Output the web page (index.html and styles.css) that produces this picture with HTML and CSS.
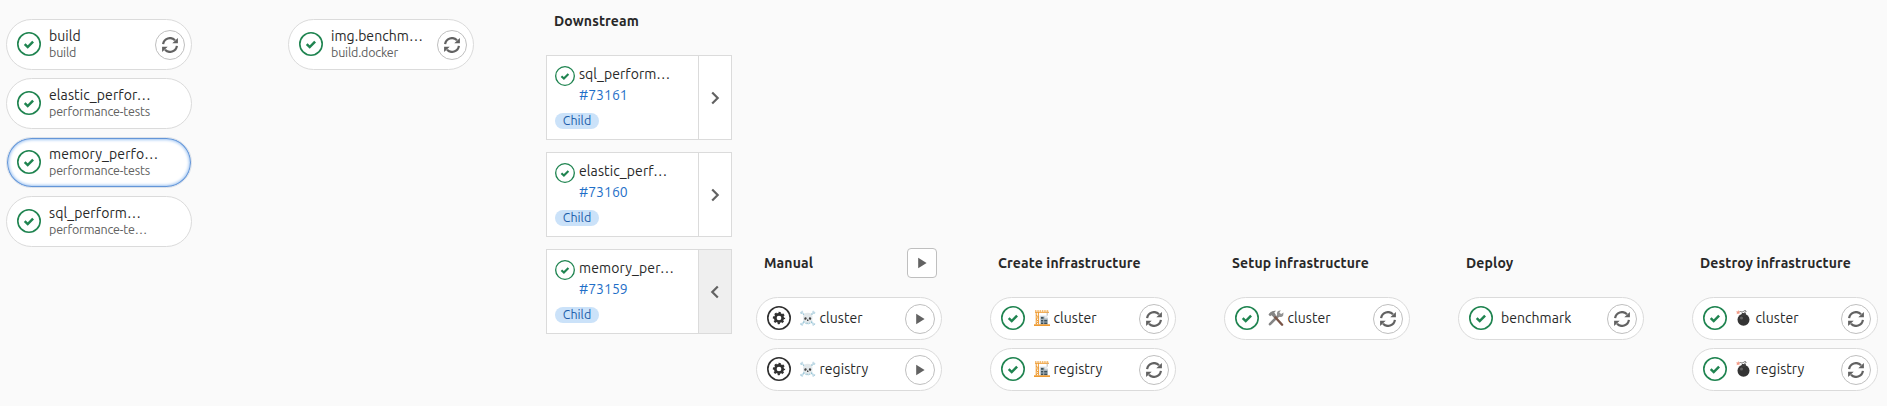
FILE: index.html
```
<!DOCTYPE html>
<html lang="en">
<head>
<meta charset="utf-8">
<title>Pipeline graph</title>
<link rel="stylesheet" href="styles.css">
</head>
<body>
<svg class="sprite" aria-hidden="true">
  <symbol id="success" viewBox="0 0 24 24"><circle cx="12" cy="12" r="11.2" fill="none" stroke="currentColor" stroke-width="1.6"/><path d="M7.7 12.2l3 2.9 5.4-5.5" fill="none" stroke="currentColor" stroke-width="2.5"/></symbol>
  <symbol id="manual" viewBox="0 0 24 24"><circle cx="12" cy="12" r="11.2" fill="none" stroke="currentColor" stroke-width="1.6"/><circle cx="12" cy="12" r="3.7" fill="none" stroke="currentColor" stroke-width="2.7"/><circle cx="12" cy="12" r="5.2" fill="none" stroke="currentColor" stroke-width="1.9" stroke-dasharray="2.2 1.884" stroke-dashoffset="1.1"/></symbol>
  <symbol id="retry" viewBox="0 0 16 16"><path d="M1.100 7.200A7 7 0 0 1 13 3.200M14.900 8.800A7 7 0 0 1 3 12.800" fill="none" stroke="currentColor" stroke-width="2.200"/><path d="M15.900 1v5.300H10.300zM.1 15V9.700H5.700z" fill="currentColor"/></symbol>
  <symbol id="play" viewBox="0 0 16 16"><path d="M4.200 2.700v10.600L12.600 8z" fill="currentColor"/></symbol>
  <symbol id="chevron" viewBox="0 0 16 16"><path d="M5.200 2.500L10.700 8l-5.500 5.500" fill="none" stroke="currentColor" stroke-width="2.200"/></symbol>
  <symbol id="crane" viewBox="0 0 16 16"><path d="M5.500 5.500h7l1.500 2v7h-8.500z" fill="#e3e7ea"/><path d="M6.500 6.500h4v2h3.200v6H6.500z" fill="#a3b0b8"/><path d="M7 7h2.500v1.800H7zM7 10h2.200v1.600H7zM10.200 10h3v1.600h-3zM7 12.500h2.200v1.600H7zM10.200 12.500h3v1.600h-3z" fill="#3c505a"/><path d="M1 2.300h14M2.200 2v12.500M4.400 2v12.500M2 5l2.500 2L2 9.300l2.500 2L2 14" fill="none" stroke="#ee9a30" stroke-width="1"/><path d="M1 1h14" stroke="#f2aa4c" stroke-width="1.300" stroke-dasharray="1.500 .8"/><path d="M13.200 2.500v3.200" stroke="#999" stroke-width=".7"/><path d="M0 14.300h16V16H0z" fill="#ee9a30"/></symbol>
  <symbol id="tools" viewBox="0 0 16 16"><path d="M2 14.200L11 5" stroke="#858585" stroke-width="2.600" stroke-linecap="round"/><path d="M10 1c-1.500 1.500-1.500 4 0 5.300s4 1 5.200-.8l.3-3-2.300 1.600-1.800-1.300L12.800.3z" fill="#929292"/><path d="M6.300 6.300l7.800 8.400" stroke="#795548" stroke-width="2.400" stroke-linecap="round"/><path d="M.5 4.800C2 2 4.500.4 8 .8L6.300 2.600l1.800 2.600-2.300 2.200-2.300-2.200-1.400 1z" fill="#858585"/></symbol>
  <symbol id="bomb" viewBox="0 0 16 16"><circle cx="7.500" cy="9.800" r="6" fill="#343434"/><path d="M5.800 3h4v3h-4z" fill="#3c3c3c"/><path d="M3.500 1.800C5 .8 5.500 3 7.500 1.400S10 .8 10 1.500 8 2.500 8 3.500" fill="none" stroke="#666" stroke-width="1"/><path d="M2.300 0l.5 1.400L4.500 1.600 3.200 2.700l.4 1.800-1.500-1-1.500.7.4-1.500L0 1.500l1.600-.1z" fill="#f39a86"/><circle cx="5.500" cy="8" r="1.500" fill="#777" opacity=".7"/></symbol>
</svg>
<main class="graph">
  <section class="stage first">
    <div class="job tall"><svg class="status"><use href="#success"/></svg><div class="label"><span class="name">build</span><span class="sub">build</span></div><button class="action" aria-label="Retry"><svg><use href="#retry"/></svg></button></div>
    <div class="job tall"><svg class="status"><use href="#success"/></svg><div class="label"><span class="name cut">elastic_perfor…</span><span class="sub">performance-tests</span></div></div>
    <div class="job tall selected"><svg class="status"><use href="#success"/></svg><div class="label"><span class="name cut">memory_perfo…</span><span class="sub">performance-tests</span></div></div>
    <div class="job tall"><svg class="status"><use href="#success"/></svg><div class="label"><span class="name cut">sql_perform…</span><span class="sub">performance-te…</span></div></div>
  </section>
  <section class="stage second">
    <div class="job tall"><svg class="status"><use href="#success"/></svg><div class="label"><span class="name">img.benchm…</span><span class="sub">build.docker</span></div><button class="action" aria-label="Retry"><svg><use href="#retry"/></svg></button></div>
  </section>
  <section class="downstream">
    <h2 class="title">Downstream</h2>
    <div class="cards">
      <article class="card"><div class="info"><svg class="status"><use href="#success"/></svg><div class="label"><span class="name">sql_perform…</span><a class="link">#73161</a></div><span class="badge">Child</span></div><button class="expand" aria-label="Expand"><svg><use href="#chevron"/></svg></button></article>
      <article class="card"><div class="info"><svg class="status"><use href="#success"/></svg><div class="label"><span class="name cut">elastic_perf…</span><a class="link">#73160</a></div><span class="badge">Child</span></div><button class="expand" aria-label="Expand"><svg><use href="#chevron"/></svg></button></article>
      <article class="card open"><div class="info"><svg class="status"><use href="#success"/></svg><div class="label"><span class="name cut">memory_per…</span><a class="link">#73159</a></div><span class="badge">Child</span></div><button class="expand" aria-label="Collapse"><svg><use href="#chevron"/></svg></button></article>
    </div>
  </section>
  <div class="child">
    <section class="stage">
      <header class="head"><h2 class="title">Manual</h2><button class="action square" aria-label="Play all"><svg><use href="#play"/></svg></button></header>
      <div class="job"><svg class="status dark"><use href="#manual"/></svg><div class="label"><span class="name"><span class="emoji">☠️</span>cluster</span></div><button class="action" aria-label="Play"><svg><use href="#play"/></svg></button></div>
      <div class="job"><svg class="status dark"><use href="#manual"/></svg><div class="label"><span class="name"><span class="emoji">☠️</span>registry</span></div><button class="action" aria-label="Play"><svg><use href="#play"/></svg></button></div>
    </section>
    <section class="stage">
      <header class="head"><h2 class="title">Create infrastructure</h2></header>
      <div class="job"><svg class="status"><use href="#success"/></svg><div class="label"><span class="name"><svg class="pic"><use href="#crane"/></svg>cluster</span></div><button class="action" aria-label="Retry"><svg><use href="#retry"/></svg></button></div>
      <div class="job"><svg class="status"><use href="#success"/></svg><div class="label"><span class="name"><svg class="pic"><use href="#crane"/></svg>registry</span></div><button class="action" aria-label="Retry"><svg><use href="#retry"/></svg></button></div>
    </section>
    <section class="stage">
      <header class="head"><h2 class="title">Setup infrastructure</h2></header>
      <div class="job"><svg class="status"><use href="#success"/></svg><div class="label"><span class="name"><svg class="pic"><use href="#tools"/></svg>cluster</span></div><button class="action" aria-label="Retry"><svg><use href="#retry"/></svg></button></div>
    </section>
    <section class="stage">
      <header class="head"><h2 class="title">Deploy</h2></header>
      <div class="job"><svg class="status"><use href="#success"/></svg><div class="label"><span class="name">benchmark</span></div><button class="action" aria-label="Retry"><svg><use href="#retry"/></svg></button></div>
    </section>
    <section class="stage">
      <header class="head"><h2 class="title">Destroy infrastructure</h2></header>
      <div class="job"><svg class="status"><use href="#success"/></svg><div class="label"><span class="name"><svg class="pic"><use href="#bomb"/></svg>cluster</span></div><button class="action" aria-label="Retry"><svg><use href="#retry"/></svg></button></div>
      <div class="job"><svg class="status"><use href="#success"/></svg><div class="label"><span class="name"><svg class="pic"><use href="#bomb"/></svg>registry</span></div><button class="action" aria-label="Retry"><svg><use href="#retry"/></svg></button></div>
    </section>
  </div>
</main>
</body>
</html>
```
FILE: styles.css
```
* { box-sizing: border-box; }
body { margin: 0; background: #fafafa; color: #282828; font-family: Ubuntu, "Noto Sans", sans-serif; font-size: 14px; line-height: 17px; overflow: hidden; }
.sprite { display: none; }
.graph { display: flex; align-items: flex-start; height: 406px; padding-left: 6px; }
.stage { display: flex; flex-direction: column; gap: 8px; width: 186px; flex: none; }
.first, .second { padding-top: 19px; }
.first { margin-right: 96px; }
.second { margin-right: 72px; }
.job { display: flex; align-items: center; height: 43px; padding: 0 6px 0 10px; border: 1px solid #dbdbdb; border-radius: 26px; background: #fff; }
.job.tall { height: 51px; }
.job.selected { border-color: #dce2ea; box-shadow: inset 0 0 0 1px #6496d8, inset 0 0 3px 2px #a0c5f2; }
.status { width: 24px; height: 24px; flex: none; margin-top: -1px; color: #1f8450; }
.status.dark { color: #303030; }
.label { display: flex; flex-direction: column; flex: 1; margin-left: 8px; white-space: nowrap; }
.job .label { margin-top: -1px; }
.job.tall .label { margin-top: -3px; }
.name { letter-spacing: 0.04px; }
.name.cut { letter-spacing: 0.1px; }
.sub { font-size: 12.5px; line-height: 14px; color: #606060; letter-spacing: -0.18px; }
.emoji { display: inline-block; width: 20.500px; letter-spacing: 0; font-family: "Noto Color Emoji", sans-serif; }
.pic { width: 16px; height: 16px; margin: 0 4px 0 0.500px; vertical-align: -3px; }
.action { display: flex; align-items: center; justify-content: center; width: 30px; height: 30px; padding: 0; flex: none; border: 1px solid #bfbfbf; border-radius: 50%; background: #fff; color: #626262; }
.action svg { width: 16px; height: 16px; }
.job .action { margin-top: 1px; }
.action.square { border-radius: 4px; }
.title { margin: 0; font-size: 14px; line-height: 20px; font-weight: 700; letter-spacing: 0.130px; }
.downstream { width: 186px; flex: none; padding-top: 11px; }
.downstream .title { padding-left: 8px; }
.cards { display: flex; flex-direction: column; gap: 12px; margin-top: 24px; }
.card { display: flex; height: 85px; border: 1px solid #dbdbdb; background: #fff; }
.info { display: grid; grid-template-columns: 20px 1fr; grid-template-rows: 47px 16px; flex: 1; padding: 10px 0 0 8px; }
.card .status { width: 20px; height: 20px; margin: 0; }
.card .label { margin: 0 0 0 4px; }
.link { line-height: 25px; color: #1f6fc8; }
.badge { grid-column: 1 / 3; width: 44px; height: 16px; border-radius: 8px; background: #cbe2f9; color: #1d5fab; font-size: 12.5px; line-height: 15px; text-align: center; }
.expand { display: flex; align-items: center; justify-content: center; width: 33px; padding: 0; border: 0; border-left: 1px solid #dbdbdb; background: #fff; color: #626262; }
.expand svg { width: 16px; height: 16px; }
.open .expand { background: #efefef; }
.open .expand svg { transform: scaleX(-1); }
.child { display: flex; gap: 48px; margin-left: 24px; padding-top: 248px; }
.head { display: flex; align-items: center; justify-content: space-between; height: 30px; margin-bottom: 11px; padding: 0 5px 0 8px; }
```
